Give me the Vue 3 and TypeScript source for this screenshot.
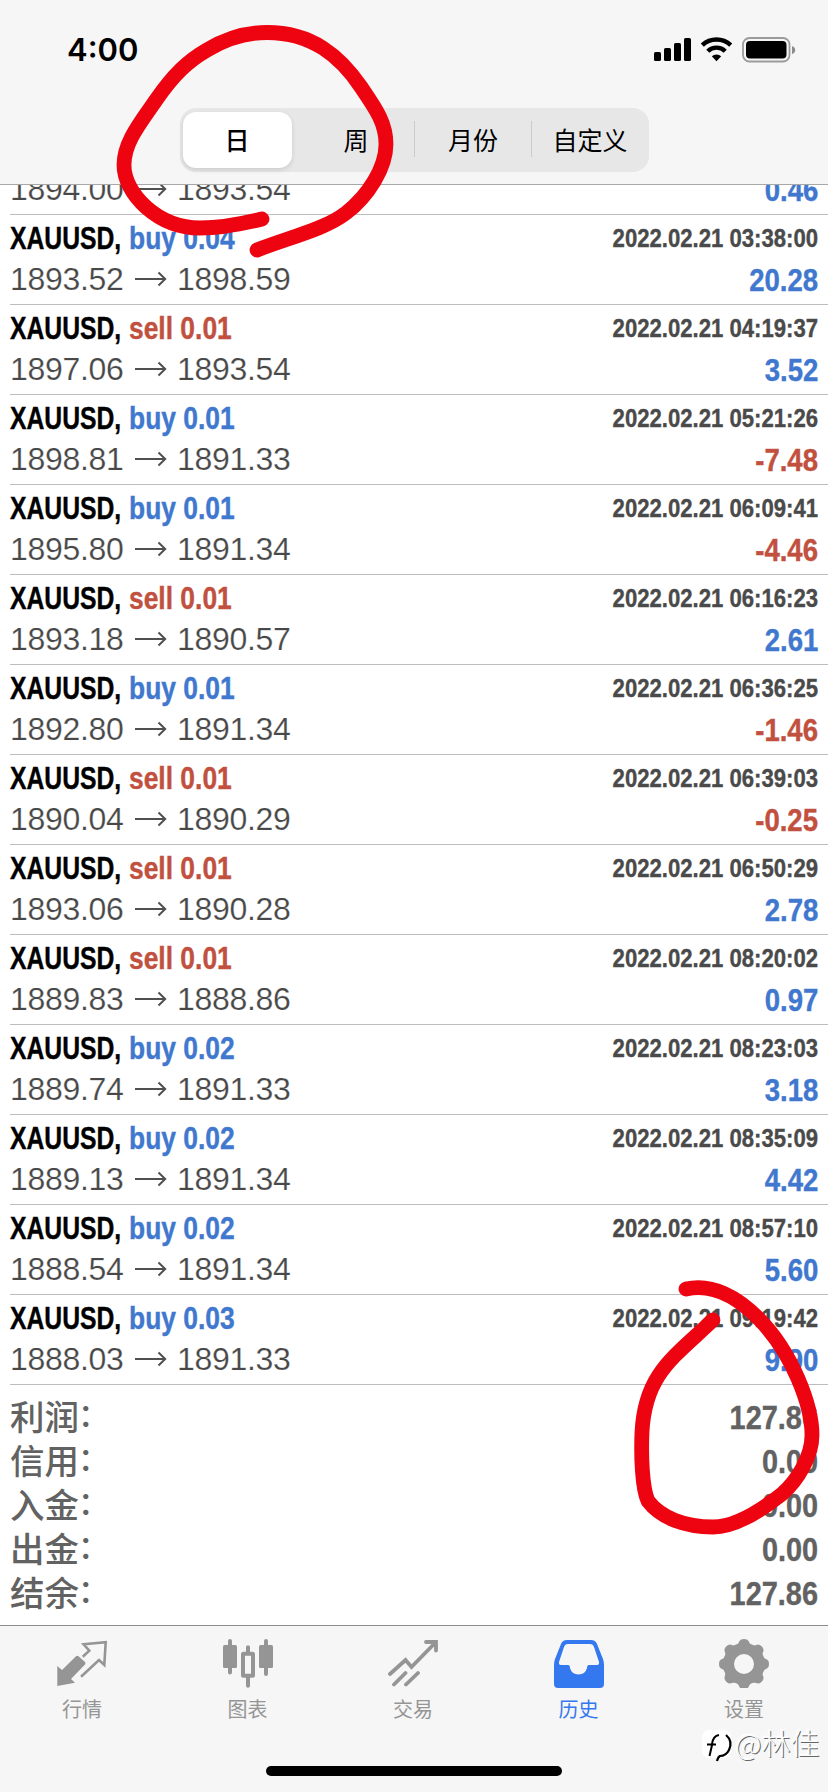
<script setup lang="ts">
interface Deal {
  side: 'buy' | 'sell'
  volume: string
  open: string
  close: string
  time: string
  profit: string
}

const periods: string[] = ['日', '周', '月份', '自定义']

const d = (side: 'buy' | 'sell', volume: string, open: string, close: string, time: string, profit: string): Deal => ({
  side, volume, open, close, time: `2022.02.21 ${time}`, profit,
})

// Price and result of the deal that is partly scrolled under the header
const scrolled = { open: '1894.00', close: '1893.54', profit: '0.46' }

const deals: Deal[] = [
  d('buy', '0.04', '1893.52', '1898.59', '03:38:00', '20.28'),
  d('sell', '0.01', '1897.06', '1893.54', '04:19:37', '3.52'),
  d('buy', '0.01', '1898.81', '1891.33', '05:21:26', '-7.48'),
  d('buy', '0.01', '1895.80', '1891.34', '06:09:41', '-4.46'),
  d('sell', '0.01', '1893.18', '1890.57', '06:16:23', '2.61'),
  d('buy', '0.01', '1892.80', '1891.34', '06:36:25', '-1.46'),
  d('sell', '0.01', '1890.04', '1890.29', '06:39:03', '-0.25'),
  d('sell', '0.01', '1893.06', '1890.28', '06:50:29', '2.78'),
  d('sell', '0.01', '1889.83', '1888.86', '08:20:02', '0.97'),
  d('buy', '0.02', '1889.74', '1891.33', '08:23:03', '3.18'),
  d('buy', '0.02', '1889.13', '1891.34', '08:35:09', '4.42'),
  d('buy', '0.02', '1888.54', '1891.34', '08:57:10', '5.60'),
  d('buy', '0.03', '1888.03', '1891.33', '09:19:42', '9.90'),
]

const totals = [
  { label: '利润', value: '127.86' },
  { label: '信用', value: '0.00' },
  { label: '入金', value: '0.00' },
  { label: '出金', value: '0.00' },
  { label: '结余', value: '127.86' },
]

const tabs = [
  { id: 'quotes', label: '行情' },
  { id: 'chart', label: '图表' },
  { id: 'trade', label: '交易' },
  { id: 'history', label: '历史' },
  { id: 'settings', label: '设置' },
]
const teeth = [0, 45, 90, 135, 180, 225, 270, 315]
</script>

<template>
  <div class="screen">
    <header class="header">
      <div class="status">
        <span class="clock">4:00</span>
        <svg class="status-icons" width="144" height="30" viewBox="0 0 144 30">
          <rect x="1" y="17" width="7" height="9" rx="1.6" />
          <rect x="11" y="13" width="7" height="13" rx="1.6" />
          <rect x="21" y="8" width="7" height="18" rx="1.6" />
          <rect x="31" y="3" width="7" height="23" rx="1.6" />
          <g fill="none" stroke="#000" stroke-width="4.4">
            <path d="M49.3 10.200a20.500 20.500 0 0 1 28.400 0" />
            <path d="M54.800 16.200a12.400 12.400 0 0 1 17.400 0" />
          </g>
          <path d="M58.800 21.300a6.800 6.800 0 0 1 9.400 0l-4.700 4.900z" />
          <rect x="90" y="3" width="46.500" height="23.500" rx="6.500" fill="none" stroke="#9b9b9b" stroke-width="1.8" />
          <rect x="93" y="6" width="40.500" height="17.500" rx="4" />
          <path d="M139 11q3.200 1 3.200 4t-3.200 4z" fill="#8c8c8c" />
        </svg>
      </div>
      <nav class="segments">
        <div v-for="(p, i) in periods" :key="p" class="segment" :class="{ active: i === 0, split: i > 1 }"><span>{{ p }}</span></div>
      </nav>
    </header>

    <main class="list">
      <section class="deal partial">
        <div class="line">
          <span class="price">{{ scrolled.open }}</span>
          <svg class="arrow" width="32" height="16" viewBox="0 0 32 16"><path d="M0 8H30M23.500 1.500L30.200 8l-6.700 6.500" /></svg>
          <span class="price">{{ scrolled.close }}</span>
          <span class="profit gain">{{ scrolled.profit }}</span>
        </div>
      </section>
      <section v-for="deal in deals" :key="deal.time" class="deal">
        <div class="line">
          <span class="symbol">XAUUSD,</span>
          <span class="action" :class="deal.side">{{ deal.side }} {{ deal.volume }}</span>
          <span class="time">{{ deal.time }}</span>
        </div>
        <div class="line">
          <span class="price">{{ deal.open }}</span>
          <svg class="arrow" width="32" height="16" viewBox="0 0 32 16"><path d="M0 8H30M23.500 1.500L30.200 8l-6.700 6.500" /></svg>
          <span class="price">{{ deal.close }}</span>
          <span class="profit" :class="deal.profit.startsWith('-') ? 'loss' : 'gain'">{{ deal.profit }}</span>
        </div>
      </section>
      <section class="totals">
        <div v-for="t in totals" :key="t.label" class="total">
          <span class="label">{{ t.label }}<i>：</i></span>
          <span class="amount">{{ t.value }}</span>
        </div>
      </section>
    </main>

    <footer class="tabbar">
      <div class="tabs">
        <div v-for="tab in tabs" :key="tab.id" class="tab" :class="{ current: tab.id === 'history' }">
          <svg width="50" height="50" viewBox="0 0 50 50" fill="currentColor">
            <g v-if="tab.id === 'quotes'">
              <path d="M.3 28L5 32 19 18.300q1.300-1.300 2.600 0l6.400 5.800q1 1.200 0 2.400L14 41l4 3.700L.3 48z" />
              <path d="M25.700 18.700L32.300 12.700 26.600 6.300 48.700 4.200 47.300 27 42 22 24 38.700" fill="none" stroke="currentColor" stroke-width="2.600" />
            </g>
            <g v-else-if="tab.id === 'chart'">
              <rect x="0" y="7" width="14" height="23" rx="1.5" />
              <rect x="36" y="7" width="14" height="23" rx="1.5" />
              <rect x="20" y="15.700" width="10" height="22" rx=".5" fill="none" stroke="currentColor" stroke-width="4" />
              <path d="M7 3V34.500M43 3V36M25 9.300V14M25 39V47.700" stroke="currentColor" stroke-width="4" stroke-linecap="round" />
            </g>
            <g v-else-if="tab.id === 'trade'" fill="none" stroke="currentColor" stroke-width="3.800" stroke-linecap="round">
              <path d="M2 36L17.500 22l6 7L47 5M38 4H48V12.500M6 46.500L17.500 35M18 46.500L30 35" />
            </g>
            <path v-else-if="tab.id === 'history'" fill-rule="evenodd" d="M13 2H37Q41.500 2 43 6L49 21Q50 24 50 27V46Q50 50 46 50H4Q0 50 0 46V27Q0 24 1 21L7 6Q8.500 2 13 2ZM14 6Q11 6 10 9L5 24Q4.500 27 7 27H14Q16 27 16 30A8.800 8.800 0 0 0 33 30Q33 27 35 27H43Q45.500 27 45 24L40 9Q39 6 36 6Z" />
            <g v-else>
              <circle cx="25" cy="26" r="15.500" fill="none" stroke="currentColor" stroke-width="11" />
              <path v-for="a in teeth" :key="a" d="M16 8Q19 7 20 4Q21 1 25 1T30 4Q31 7 34 8L30 12H20Z" :transform="`rotate(${a} 25 26)`" />
            </g>
          </svg>
          <span>{{ tab.label }}</span>
        </div>
      </div>
      <div class="home"></div>
    </footer>

    <div class="watermark">
      <svg width="34" height="36" viewBox="0 0 34 36">
        <rect x="1" y="1" width="29" height="28" rx="7" fill="#fff" />
        <path d="M8.500 27L11.500 14M6 15.500H15M11 15Q12 7 18 6" fill="none" stroke="#000" stroke-width="2" />
        <path d="M25 6Q32 12 28 21 25 27 19 27 17 28 16 32" fill="none" stroke="#000" stroke-width="2.200" />
      </svg>
      <span>@林佳</span>
    </div>

    <svg class="marks" width="828" height="1792" viewBox="0 0 828 1792">
      <path d="M262 219C238 225 220 228 200 228C158 228 124 194 124 165C124 142 141 122 156 100C174 74 188 61 207 50C227 38 245 32.500 267 32.500C312 32.500 340 56 361 87C376 109 386 123 386 144C386 168 368 196 346 213C325 229 294 236 257 250" />
      <path d="M686 1289C712 1283 738 1297 760 1320C792 1353 812 1405 812 1435C812 1456 798 1480 782 1494C763 1509 736 1527 713 1527C685 1527 661 1518 648 1501C642 1488 641 1455 642 1432C645 1374 673 1358 713 1320" />
    </svg>
  </div>
</template>

<style>
body { margin: 0; background: #fff; }
</style>

<style scoped>
.screen {
  position: relative;
  width: 828px;
  height: 1792px;
  overflow: hidden;
  display: flex;
  flex-direction: column;
  background: #fff;
  font-family: "Liberation Sans", "Noto Sans CJK SC", sans-serif;
}
.header {
  box-sizing: border-box;
  height: 185px;
  flex: none;
  background: #f6f6f7;
  border-bottom: 1px solid #a8a8a8;
  display: flex;
  flex-direction: column;
  align-items: center;
}
.status {
  box-sizing: border-box;
  width: 100%;
  height: 108px;
  padding: 35px 31px 0 67px;
  display: flex;
  justify-content: space-between;
  align-items: flex-start;
}
.clock { font: 600 31px/30px Inter, sans-serif; }
.segments {
  box-sizing: border-box;
  width: 469px;
  height: 64px;
  padding: 4px 0 4px 3px;
  border-radius: 16px;
  background: #e7e7e8;
  display: flex;
}
.segment {
  flex: 1;
  display: flex;
  align-items: center;
  justify-content: center;
  padding-bottom: 2px;
  font: 400 25px/36px "Noto Sans CJK SC", sans-serif;
  color: #000;
}
.segment span { flex: 1; text-align: center; }
.segment.split span { box-shadow: -1px 0 #cbcbcd; }
.segment.active {
  box-sizing: border-box;
  flex: 0 0 109px;
  margin-right: 6px;
  border-radius: 13px;
  background: #fff;
  box-shadow: 0 2px 5px rgba(0, 0, 0, .12);
  font-weight: 500;
}
.list {
  height: 1440px;
  flex: none;
  display: flex;
  flex-direction: column;
  justify-content: flex-end;
  overflow: hidden;
}
.deal {
  box-sizing: border-box;
  flex: none;
  height: 90px;
  margin-left: 10px;
  padding: 2px 10px 0 0;
  border-bottom: 1px solid #bdbdbd;
}
.deal.partial { height: 30px; padding-top: 0; }
.partial .line { margin-top: -17px; }
.line { display: flex; height: 41px; line-height: 42px; font-size: 32px; white-space: nowrap; }
.symbol, .action, .time, .profit, .amount { font-weight: 700; -webkit-text-stroke: .4px currentColor; }
.symbol { width: 119px; transform: scaleX(.772); transform-origin: left; }
.action { transform: scaleX(.825); transform-origin: left; }
.buy, .gain { color: #3f78ce; }
.sell, .loss { color: #c1503f; }
.time { margin-left: auto; font-size: 26.500px; color: #4a4a4a; transform: scaleX(.835); transform-origin: right; }
.price { width: 114px; color: #484848; letter-spacing: -.3px; -webkit-text-stroke: .2px #fff; }
.arrow { margin: 13px 10px 0 11px; flex: none; fill: none; stroke: #505050; stroke-width: 2; }
.profit { margin-left: auto; position: relative; top: 1px; transform: scaleX(.86); transform-origin: right; }
.totals { box-sizing: border-box; flex: none; height: 240px; padding: 10px 10px 0 10px; }
.total { display: flex; justify-content: space-between; height: 44px; line-height: 44px; color: #626262; }
.label { margin-top: -2px; font: 500 34.500px/44px "Noto Sans CJK SC", sans-serif; }
.label i { font-style: normal; display: inline-block; font-size: 31px; line-height: 40px; transform: translate(-1px, -4px); }
.amount { font-size: 34px; transform: scaleX(.85); transform-origin: right; }
.tabbar {
  box-sizing: border-box;
  flex: 1;
  background: #f6f6f6;
  border-top: 1px solid #8c8c8c;
  display: flex;
  flex-direction: column;
  align-items: center;
}
.tabs { width: 828px; height: 140px; display: flex; justify-content: center; margin-left: -2px; }
.tab {
  width: 165.500px;
  padding-top: 12px;
  display: flex;
  flex-direction: column;
  align-items: center;
  color: #959595;
}
.tab span { margin-top: 7px; font: 400 20px/28px "Noto Sans CJK SC", sans-serif; }
.tab.current { color: #3478f0; }
.home { width: 296px; height: 10px; border-radius: 5px; background: #000; }
.watermark {
  position: absolute;
  left: 701px;
  top: 1729px;
  display: flex;
  font: 300 29px/26px "Noto Sans CJK SC", sans-serif;
  color: #fafafa;
  text-shadow: 1px 1px 0 #666, -1px -1px 0 #fff;
}
.marks {
  position: absolute;
  left: 0;
  top: 0;
  fill: none;
  stroke: #ee0310;
  stroke-width: 14.800;
  stroke-linecap: round;
  stroke-linejoin: round;
}
</style>
